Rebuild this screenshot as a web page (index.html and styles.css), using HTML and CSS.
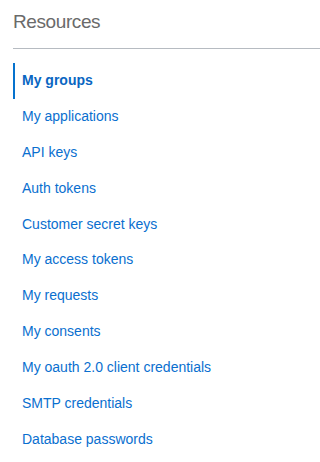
FILE: index.html
```html
<!DOCTYPE html>
<html lang="en">
<head>
<meta charset="utf-8">
<title>Resources</title>
<link rel="stylesheet" href="styles.css">
</head>
<body>
<nav class="resources">
  <h2 class="resources-title">Resources</h2>
  <ul class="resources-list">
    <li class="resources-item is-active"><a href="#">My groups</a></li>
    <li class="resources-item"><a href="#">My applications</a></li>
    <li class="resources-item"><a href="#">API keys</a></li>
    <li class="resources-item"><a href="#">Auth tokens</a></li>
    <li class="resources-item"><a href="#">Customer secret keys</a></li>
    <li class="resources-item"><a href="#">My access tokens</a></li>
    <li class="resources-item"><a href="#">My requests</a></li>
    <li class="resources-item"><a href="#">My consents</a></li>
    <li class="resources-item"><a href="#">My oauth 2.0 client credentials</a></li>
    <li class="resources-item"><a href="#">SMTP credentials</a></li>
    <li class="resources-item"><a href="#">Database passwords</a></li>
  </ul>
</nav>
</body>
</html>
```

FILE: styles.css
```css
html, body {
  margin: 0;
  padding: 0;
  background: #ffffff;
}

body {
  font-family: "Liberation Sans", Arial, Helvetica, sans-serif;
}

.resources {
  padding-left: 13px;
  padding-top: 11px;
}

.resources-title {
  margin: 0;
  padding-bottom: 15px;
  border-bottom: 1px solid #b6bbc1;
  font-size: 19px;
  line-height: 22px;
  font-weight: 300;
  letter-spacing: -0.4px;
  color: #6a6a6a;
}

.resources-list {
  list-style: none;
  margin: 14px 0 0 0;
  padding: 0;
}

.resources-item {
  border-left: 2px solid transparent;
  padding-left: 7px;
  font-size: 14px;
  line-height: 35.87px;
}

.resources-item a {
  color: #0a6fcf;
  text-decoration: none;
}

.resources-item.is-active {
  border-left-color: #0572ce;
}

.resources-item.is-active a {
  font-weight: bold;
  color: #0a66c2;
}
```
